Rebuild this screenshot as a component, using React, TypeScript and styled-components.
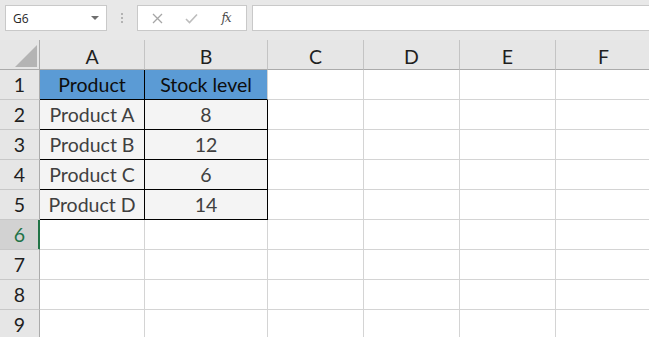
import React from 'react';
import styled, { createGlobalStyle } from 'styled-components';

const GlobalStyle = createGlobalStyle`
  html, body {
    margin: 0;
    padding: 0;
    background: #ffffff;
    overflow: hidden;
  }
  * {
    box-sizing: border-box;
  }
`;

const Window = styled.div`
  width: 649px;
  height: 337px;
  overflow: hidden;
  display: flex;
  flex-direction: column;
  background: #ffffff;
`;

const FormulaBar = styled.div`
  height: 40px;
  flex: none;
  display: flex;
  align-items: flex-start;
  padding: 5px 0 0 5px;
  background: #e8e8e8;
`;

const NameBox = styled.div`
  width: 102px;
  height: 26px;
  display: flex;
  align-items: center;
  justify-content: space-between;
  padding: 0 7px 0 7px;
  background: #ffffff;
  border: 1px solid #c9c9c9;
  font-family: 'Open Sans', 'Noto Sans', sans-serif;
  font-size: 12px;
  color: #262626;
`;

const DropArrow = styled.span`
  width: 0;
  height: 0;
  border-left: 4px solid transparent;
  border-right: 4px solid transparent;
  border-top: 4px solid #6f6f6f;
  margin-top: -1px;
`;

const Grip = styled.div`
  width: 30px;
  height: 26px;
  display: flex;
  flex-direction: column;
  align-items: center;
  justify-content: center;
  gap: 2px;

  span {
    width: 2px;
    height: 2px;
    background: #b3b3b3;
  }
`;

const ButtonBox = styled.div`
  width: 110px;
  height: 26px;
  display: flex;
  align-items: center;
  background: #ffffff;
  border: 1px solid #c9c9c9;
`;

const BarButton = styled.span<{ $width: number }>`
  width: ${p => p.$width}px;
  height: 24px;
  display: flex;
  align-items: center;
  justify-content: center;
`;

const FxLabel = styled.span`
  font-family: 'DejaVu Serif', 'Liberation Serif', serif;
  font-style: italic;
  font-size: 12px;
  color: #4a4a4a;
  letter-spacing: -1px;
`;

const FormulaInput = styled.div`
  flex: 1;
  margin-left: 5px;
  margin-right: -2px;
  height: 26px;
  background: #ffffff;
  border: 1px solid #c9c9c9;
`;

const Sheet = styled.div`
  display: grid;
  grid-template-columns: 40px 105px 123px 96px 96px 96px 96px;
  grid-auto-rows: 30px;
  font-family: Lato, 'Noto Sans', sans-serif;
  font-size: 19.5px;
`;

const Corner = styled.div`
  display: flex;
  align-items: flex-end;
  justify-content: flex-end;
  padding: 0 2px 2px 0;
  background: #e6e6e6;
  border-right: 1px solid #ababab;
  border-bottom: 1px solid #ababab;
`;

const ColHeader = styled.div`
  display: flex;
  align-items: center;
  justify-content: center;
  padding-top: 4px;
  background: #e6e6e6;
  color: #1f1f1f;
  border-right: 1px solid #c4c4c4;
  border-bottom: 1px solid #ababab;
`;

const RowHeader = styled.div<{ $active?: boolean }>`
  display: flex;
  align-items: center;
  justify-content: center;
  background: ${p => (p.$active ? '#d2d2d2' : '#e6e6e6')};
  color: ${p => (p.$active ? '#217346' : '#1f1f1f')};
  border-right: 1px solid ${p => (p.$active ? '#217346' : '#ababab')};
  border-bottom: 1px solid #c8c8c8;
  box-shadow: ${p => (p.$active ? 'inset -1px 0 0 #217346' : 'none')};
`;

type Variant = 'head' | 'body' | 'empty';

const Cell = styled.div<{ $variant: Variant; $edge?: boolean }>`
  display: flex;
  align-items: center;
  justify-content: center;
  background: ${p => (p.$variant === 'head' ? '#5b9bd5' : p.$variant === 'body' ? '#f4f4f4' : '#ffffff')};
  color: ${p => (p.$variant === 'head' ? '#0d0d0d' : '#404040')};
  border-right: 1px solid ${p => (p.$variant === 'empty' || (p.$variant === 'head' && p.$edge) ? '#d4d4d4' : '#000000')};
  border-bottom: 1px solid ${p => (p.$variant === 'empty' ? '#d4d4d4' : '#000000')};
`;

const columns = ['A', 'B', 'C', 'D', 'E', 'F'];

const data: [string, string][] = [
  ['Product A', '8'],
  ['Product B', '12'],
  ['Product C', '6'],
  ['Product D', '14'],
];

const SelectAll = () => (
  <svg width="22" height="22" viewBox="0 0 22 22">
    <path d="M22 0 L22 22 L0 22 Z" fill="#b4b4b4" />
  </svg>
);

const CancelIcon = () => (
  <svg width="11" height="11" viewBox="0 0 11 11">
    <path d="M1 1 L10 10 M10 1 L1 10" stroke="#a6a6a6" strokeWidth="1.3" fill="none" />
  </svg>
);

const CheckIcon = () => (
  <svg width="13" height="11" viewBox="0 0 13 11">
    <path d="M1 6 L4.5 9.5 L12 1.5" stroke="#bdbdbd" strokeWidth="1.6" fill="none" />
  </svg>
);

const rowCells = (row: number) => {
  if (row === 1) {
    return [
      <Cell key="a" $variant="head">Product</Cell>,
      <Cell key="b" $variant="head" $edge>Stock level</Cell>,
    ];
  }
  if (row >= 2 && row <= 5) {
    const [name, stock] = data[row - 2];
    return [
      <Cell key="a" $variant="body">{name}</Cell>,
      <Cell key="b" $variant="body">{stock}</Cell>,
    ];
  }
  return [<Cell key="a" $variant="empty" />, <Cell key="b" $variant="empty" />];
};

const App = () => {
  const rows = [1, 2, 3, 4, 5, 6, 7, 8, 9];

  return (
    <>
      <GlobalStyle />
      <Window>
        <FormulaBar>
          <NameBox>
            G6
            <DropArrow />
          </NameBox>
          <Grip>
            <span />
            <span />
            <span />
          </Grip>
          <ButtonBox>
            <BarButton $width={38}>
              <CancelIcon />
            </BarButton>
            <BarButton $width={30}>
              <CheckIcon />
            </BarButton>
            <BarButton $width={40}>
              <FxLabel>fx</FxLabel>
            </BarButton>
          </ButtonBox>
          <FormulaInput />
        </FormulaBar>

        <Sheet>
          <Corner>
            <SelectAll />
          </Corner>
          {columns.map(c => (
            <ColHeader key={c}>{c}</ColHeader>
          ))}
          {rows.map(r => (
            <React.Fragment key={r}>
              <RowHeader $active={r === 6}>{r}</RowHeader>
              {rowCells(r)}
              {columns.slice(2).map(c => (
                <Cell key={c} $variant="empty" />
              ))}
            </React.Fragment>
          ))}
        </Sheet>
      </Window>
    </>
  );
};

export default App;
